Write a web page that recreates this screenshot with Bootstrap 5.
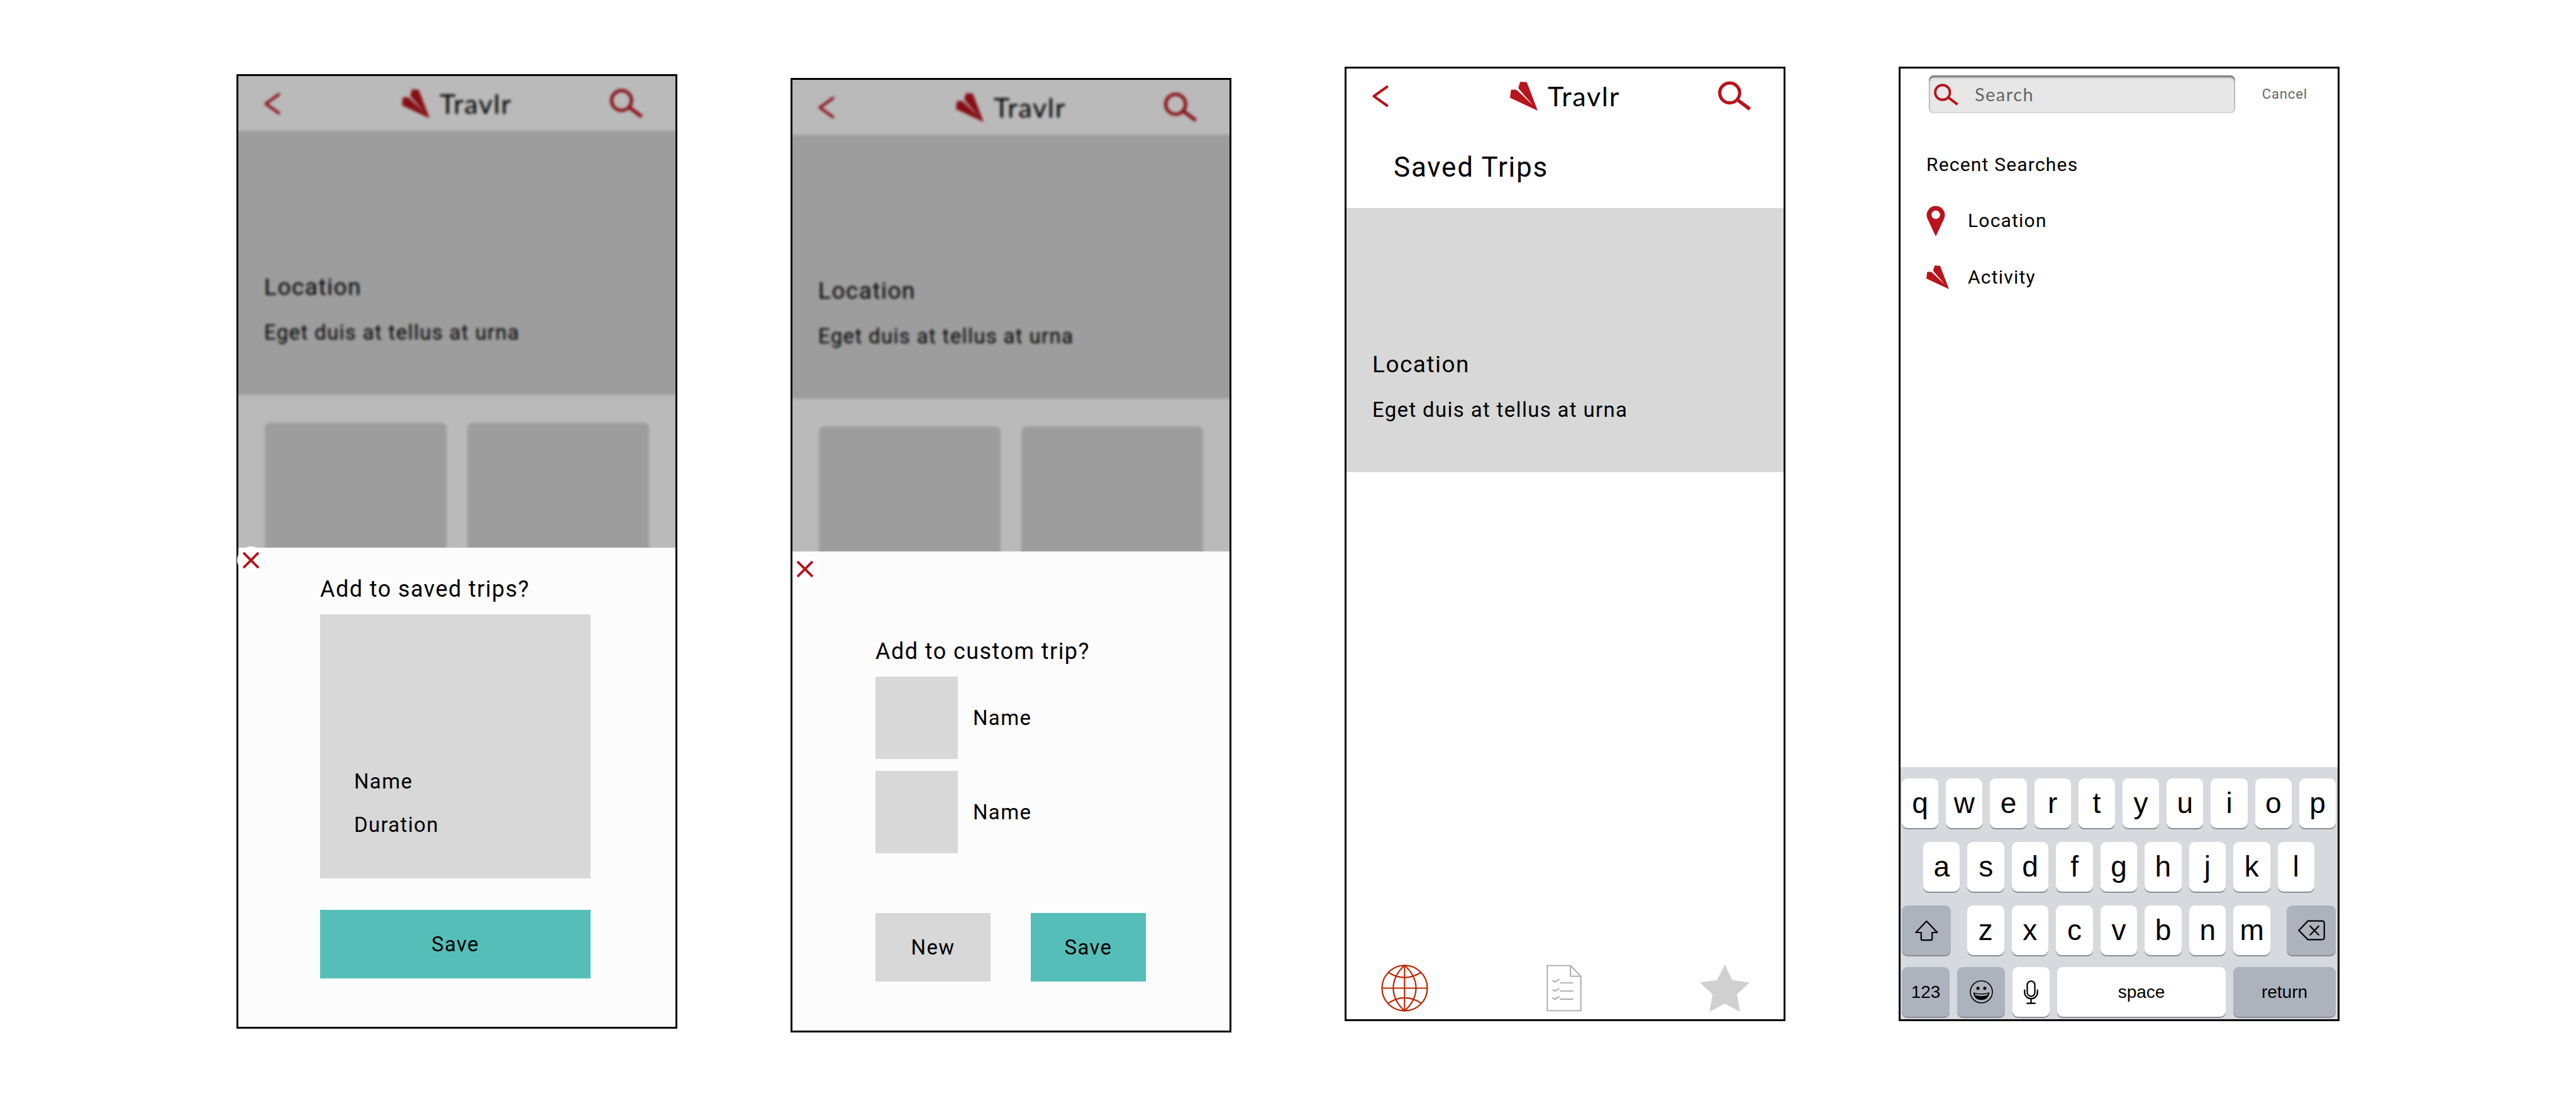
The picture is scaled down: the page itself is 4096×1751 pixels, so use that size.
<!DOCTYPE html>
<html lang="en">
<head>
<meta charset="utf-8">
<meta name="viewport" content="width=device-width, initial-scale=1">
<title>Travlr screens</title>
<link rel="stylesheet" href="https://cdn.jsdelivr.net/npm/bootstrap@5.3.0/dist/css/bootstrap.min.css">
<style>
  :root { --brand: #b9131c; --teal: #55beb8; --tile: #d8d8d8; --key: #adb3bd; }
  body { font-family: Roboto, "Liberation Sans", sans-serif; color: #000; background: #fff; }
  .stage { display: grid; grid-template-columns: repeat(4, minmax(0, 1fr)); column-gap: 180px; align-items: start; padding: 106px 376px 110px; }
  .stage .drop-s { margin-top: 12px; }
  .stage .drop-m { margin-top: 18px; }
  .phone { border: 3px solid #000; background: #fff; min-height: 1518px; }

  .t-title, .t-head, .t-sheet, .t-body, .t-list, .brand-name, .flat, .cancel { letter-spacing: .04em; }
  .t-title { font-size: 44px; line-height: 56px; }
  .t-head { font-size: 37px; line-height: 48px; }
  .t-sheet { font-size: 36px; line-height: 48px; }
  .t-body { font-size: 33px; line-height: 48px; }
  .t-list { font-size: 30px; line-height: 40px; }

  .plain { border: 0; background: none; padding: 0; color: inherit; line-height: 1; display: block; }
  .topbar { height: 87px; color: var(--brand); }
  .go-back { margin-left: 40px; }
  .go-search { margin-left: auto; margin-right: 51px; }
  .brand-name { font: 43px/48px Lato, sans-serif; color: #000; }
  svg { display: block; }
  .ln { fill: none; stroke: currentColor; }

  .hero-tile { background: var(--tile); height: 420px; padding: 0 41px 75px; gap: 24px; }
  .backdrop-part { height: 750px; overflow: hidden; }
  .scrim { background: rgba(0, 0, 0, .27); backdrop-filter: blur(2px); }
  .tiles { padding: 44px 42px 0; gap: 33px; }
  .tiles > div { background: var(--tile); border-radius: 9px; height: 260px; }

  .sheet { background: #fcfcfc; padding: 0 135px 76px 130px; }
  .sheet-saved { padding-top: 42px; }
  .sheet-custom { padding-top: 135px; padding-left: 132px; padding-right: 133px; overflow: hidden; }
  .close-x { width: 44px; height: 43px; border-radius: 50%; background: #fff; color: var(--brand); left: -2px; }
  .sheet-saved .close-x { top: -2px; }
  .sheet-custom .close-x { top: 6px; }
  .trip-tile { background: var(--tile); height: 420px; margin: 16px 0 50px; padding: 0 54px 61px; gap: 21px; }
  .thumb { width: 131px; height: 131px; background: var(--tile); }
  .trips { margin: 16px 0 95px; gap: 19px; }
  .trips > div { gap: 24px; }
  .actions { gap: 64px; }
  .flat { height: 109px; border: 0; border-radius: 0; font-size: 33px; color: #000; }
  .flat-teal { background: var(--teal); }
  .flat-grey { background: var(--tile); }

  .saved-title { padding: 42px 75px 37px; }
  .tabs { padding: 0 54px 12px 55px; }

  .searchrow { padding: 11px 48px 0 45px; gap: 43px; }
  .searchbox { height: 60px; border-radius: 8px; background: #e7e7e7; box-shadow: inset 0 3px 3px rgba(0, 0, 0, .5), inset 0 0 2px rgba(0, 0, 0, .4); padding-left: 8px; gap: 26px; color: var(--brand); }
  .searchbox input { border: 0; background: none; outline: 0; min-width: 0; font: 29px/40px Lato, sans-serif; letter-spacing: .05em; padding: 0; }
  .searchbox input::placeholder { color: #666; opacity: 1; }
  .cancel { font-size: 22px; color: #666; }
  .recents { padding: 62px 41px 0; }
  .recents h2 { margin: 0 0 24px; }
  .recents li { height: 90px; }
  .recents a { color: #000; text-decoration: none; }
  .recents .mk { width: 66px; color: var(--brand); }

  .keys { background: #d6d9de; padding: 18px 3px 4px 2px; gap: 22px; }
  .krow { gap: 12px; }
  .krow-mid { padding: 0 34px; }
  .krow-low { margin: 0 26px; gap: 12px; }
  .kb { flex: 1 1 0; min-width: 0; height: 79px; border: 0; padding: 0; border-radius: 9px; background: #fff; color: #000; box-shadow: 0 2px 0 #8b8d91; font: 46px/79px "Liberation Sans", Arial, sans-serif; display: flex; justify-content: center; align-items: center; }
  .kb-dark { background: var(--key); }
  .kb-sm { font-size: 28px; }
  .w-sh { flex: 0 0 78px; }
  .w-num { flex: 0 0 76px; }
  .w-mic { flex: 0 0 59px; }
  .w-ret { flex: 0 0 163px; }
  .krow-last { margin-top: -3px; }
</style>
<script src="https://cdn.jsdelivr.net/npm/bootstrap@5.3.0/dist/js/bootstrap.bundle.min.js"></script>
</head>
<body>
<svg width="0" height="0" class="position-absolute" aria-hidden="true">
  <symbol id="plane" viewBox="0 0 135 141"><path fill="currentColor" d="M50 0 82 2 135 141 0 78 5 39 27 38 37 44 113 116 42 34 42 24Z"/></symbol>
  <symbol id="glass" viewBox="86 86 122 110"><circle class="ln" cx="129" cy="130" r="37" stroke-width="12"/><path class="ln" d="M157 155 204 190" stroke-width="13"/></symbol>
  <symbol id="back" viewBox="0 0 26 34"><path class="ln" d="M24 2 3 17 24 32" stroke-width="4" stroke-linecap="round" stroke-linejoin="round"/></symbol>
  <symbol id="cross" viewBox="0 0 26 26"><path class="ln" d="M1 1 25 25M25 1 1 25" stroke-width="4"/></symbol>
</svg>

<main class="stage">

  <!-- Add to saved trips -->
  <section class="phone drop-s d-flex flex-column">
    <div class="backdrop-part position-relative">
      <header class="topbar d-flex align-items-center">
        <div class="col"><button class="plain go-back" aria-label="Back"><svg width="27" height="34"><use href="#back"/></svg></button></div>
        <div class="d-flex align-items-center gap-3"><svg width="44" height="46"><use href="#plane"/></svg><span class="brand-name">Travlr</span></div>
        <div class="col"><button class="plain go-search" aria-label="Search"><svg width="54" height="47"><use href="#glass"/></svg></button></div>
      </header>
      <div class="hero-tile d-flex flex-column justify-content-end"><div class="t-head">Location</div><div class="t-body">Eget duis at tellus at urna</div></div>
      <div class="tiles d-flex"><div class="flex-fill"></div><div class="flex-fill"></div></div>
      <div class="scrim position-absolute top-0 start-0 w-100 h-100"></div>
    </div>
    <div class="sheet sheet-saved position-relative flex-grow-1">
      <button class="plain close-x position-absolute d-flex align-items-center justify-content-center" aria-label="Close"><svg width="26" height="26"><use href="#cross"/></svg></button>
      <div class="t-sheet">Add to saved trips?</div>
      <div class="trip-tile d-flex flex-column justify-content-end"><div class="t-body">Name</div><div class="t-body">Duration</div></div>
      <button class="btn flat flat-teal w-100">Save</button>
    </div>
  </section>

  <!-- Add to custom trip -->
  <section class="phone drop-m d-flex flex-column">
    <div class="backdrop-part position-relative">
      <header class="topbar d-flex align-items-center">
        <div class="col"><button class="plain go-back" aria-label="Back"><svg width="27" height="34"><use href="#back"/></svg></button></div>
        <div class="d-flex align-items-center gap-3"><svg width="44" height="46"><use href="#plane"/></svg><span class="brand-name">Travlr</span></div>
        <div class="col"><button class="plain go-search" aria-label="Search"><svg width="54" height="47"><use href="#glass"/></svg></button></div>
      </header>
      <div class="hero-tile d-flex flex-column justify-content-end"><div class="t-head">Location</div><div class="t-body">Eget duis at tellus at urna</div></div>
      <div class="tiles d-flex"><div class="flex-fill"></div><div class="flex-fill"></div></div>
      <div class="scrim position-absolute top-0 start-0 w-100 h-100"></div>
    </div>
    <div class="sheet sheet-custom position-relative flex-grow-1">
      <button class="plain close-x position-absolute d-flex align-items-center justify-content-center" aria-label="Close"><svg width="26" height="26"><use href="#cross"/></svg></button>
      <div class="t-sheet">Add to custom trip?</div>
      <div class="trips d-flex flex-column">
        <div class="d-flex align-items-center"><div class="thumb"></div><span class="t-body">Name</span></div>
        <div class="d-flex align-items-center"><div class="thumb"></div><span class="t-body">Name</span></div>
      </div>
      <div class="actions d-flex">
        <button class="btn flat flat-grey col">New</button>
        <button class="btn flat flat-teal col">Save</button>
      </div>
    </div>
  </section>

  <!-- Saved trips -->
  <section class="phone d-flex flex-column">
    <header class="topbar d-flex align-items-center">
      <div class="col"><button class="plain go-back" aria-label="Back"><svg width="27" height="34"><use href="#back"/></svg></button></div>
      <div class="d-flex align-items-center gap-3"><svg width="44" height="46"><use href="#plane"/></svg><span class="brand-name">Travlr</span></div>
      <div class="col"><button class="plain go-search" aria-label="Search"><svg width="54" height="47"><use href="#glass"/></svg></button></div>
    </header>
    <div class="saved-title t-title">Saved Trips</div>
    <div class="hero-tile d-flex flex-column justify-content-end"><div class="t-head">Location</div><div class="t-body">Eget duis at tellus at urna</div></div>
    <nav class="tabs d-flex justify-content-between mt-auto">
      <a href="#" aria-label="Explore"><svg width="75" height="75" viewBox="97 62 235 235"><g fill="none" stroke="#bb2a05" stroke-width="7"><circle cx="214.500" cy="179.500" r="113"/><path d="M214 66V293M101 179.500H328M214 66C139 135 139 225 214 293M214 66C290 135 290 225 214 293M133 101Q214 152 296 101M131 256Q214 200 299 256"/></g></svg></a>
      <a href="#" aria-label="Plans"><svg width="56" height="75" viewBox="921 62 177 235"><g fill="none" stroke="#a9a9a9" stroke-width="6"><path d="M925 66H1042L1094 120V293H925ZM1042 66V120H1094M988 153H1056M988 194H1056M988 235H1056M951 141 963 148 986 134M951 187 963 194 986 181M951 228 963 235 986 222"/></g></svg></a>
      <a href="#" aria-label="Favourites"><svg width="79" height="75" viewBox="0 0 170 160" preserveAspectRatio="none"><path fill="#d0d0d0" d="M85 0 111 53 170 61 127 101 137 160 85 133 33 160 43 101 0 61 59 53Z"/></svg></a>
    </nav>
  </section>

  <!-- Search -->
  <section class="phone d-flex flex-column">
    <div class="searchrow d-flex align-items-center">
      <label class="searchbox d-flex align-items-center flex-grow-1"><svg width="39" height="35" class="flex-shrink-0"><use href="#glass"/></svg><input class="flex-grow-1" type="text" placeholder="Search" aria-label="Search"></label>
      <button class="plain cancel">Cancel</button>
    </div>
    <div class="recents">
      <h2 class="t-list fw-normal">Recent Searches</h2>
      <ul class="list-unstyled m-0 t-list">
        <li class="d-flex align-items-center"><span class="mk"><svg width="30" height="49" viewBox="51 693 90 152"><path fill="currentColor" fill-rule="evenodd" d="M96 845 56 760A45 45 0 1 1 136 760ZM96 717A21 21 0 1 0 96 759 21 21 0 1 0 96 717Z"/></svg></span><a href="#">Location</a></li>
        <li class="d-flex align-items-center"><span class="mk"><svg width="36" height="38"><use href="#plane"/></svg></span><a href="#">Activity</a></li>
      </ul>
    </div>
    <div class="keys d-flex flex-column mt-auto">
      <div class="krow d-flex">
        <button class="kb">q</button><button class="kb">w</button><button class="kb">e</button><button class="kb">r</button><button class="kb">t</button><button class="kb">y</button><button class="kb">u</button><button class="kb">i</button><button class="kb">o</button><button class="kb">p</button>
      </div>
      <div class="krow krow-mid d-flex">
        <button class="kb">a</button><button class="kb">s</button><button class="kb">d</button><button class="kb">f</button><button class="kb">g</button><button class="kb">h</button><button class="kb">j</button><button class="kb">k</button><button class="kb">l</button>
      </div>
      <div class="d-flex">
        <button class="kb kb-dark w-sh" aria-label="Shift"><svg width="37" height="34" viewBox="112 799 117 105"><path class="ln" stroke-width="7" stroke-linejoin="round" d="M170 804 224 861H198V894Q198 899 193 899H148Q143 899 143 894V861H116Z"/></svg></button>
        <div class="krow-low d-flex flex-fill">
          <button class="kb">z</button><button class="kb">x</button><button class="kb">c</button><button class="kb">v</button><button class="kb">b</button><button class="kb">n</button><button class="kb">m</button>
        </div>
        <button class="kb kb-dark w-sh" aria-label="Delete"><svg width="43" height="33" viewBox="906 801 136 102"><path class="ln" stroke-width="7" stroke-linejoin="round" stroke-linecap="round" d="M956 805H1026Q1038 805 1038 817V887Q1038 899 1026 899H956L910 853ZM967 831 1010 875M1010 831 967 875"/></svg></button>
      </div>
      <div class="krow krow-last d-flex">
        <button class="kb kb-dark kb-sm w-num">123</button>
        <button class="kb kb-dark w-num" aria-label="Emoji"><svg width="37" height="37" viewBox="380 1097 116 116"><circle class="ln" cx="438" cy="1155" r="55" stroke-width="5"/><circle cx="421" cy="1137" r="8"/><circle cx="455" cy="1137" r="8"/><path d="M398 1157Q438 1170 478 1157 475 1194 438 1195 401 1194 398 1157Z"/><path fill="#adb3bd" d="M405 1164Q438 1173 471 1164L469 1171Q438 1181 407 1171Z"/></svg></button>
        <button class="kb w-mic" aria-label="Dictate"><svg width="23" height="38" viewBox="652 1100 72 119"><g class="ln" stroke-width="7" stroke-linecap="round"><rect x="669" y="1104" width="38" height="76" rx="19"/><path d="M656 1149V1160A32 32 0 0 0 720 1160V1149M688 1193V1214M668 1215H708"/></g></svg></button>
        <button class="kb kb-sm">space</button>
        <button class="kb kb-dark kb-sm w-ret">return</button>
      </div>
    </div>
  </section>
</main>
</body>
</html>
